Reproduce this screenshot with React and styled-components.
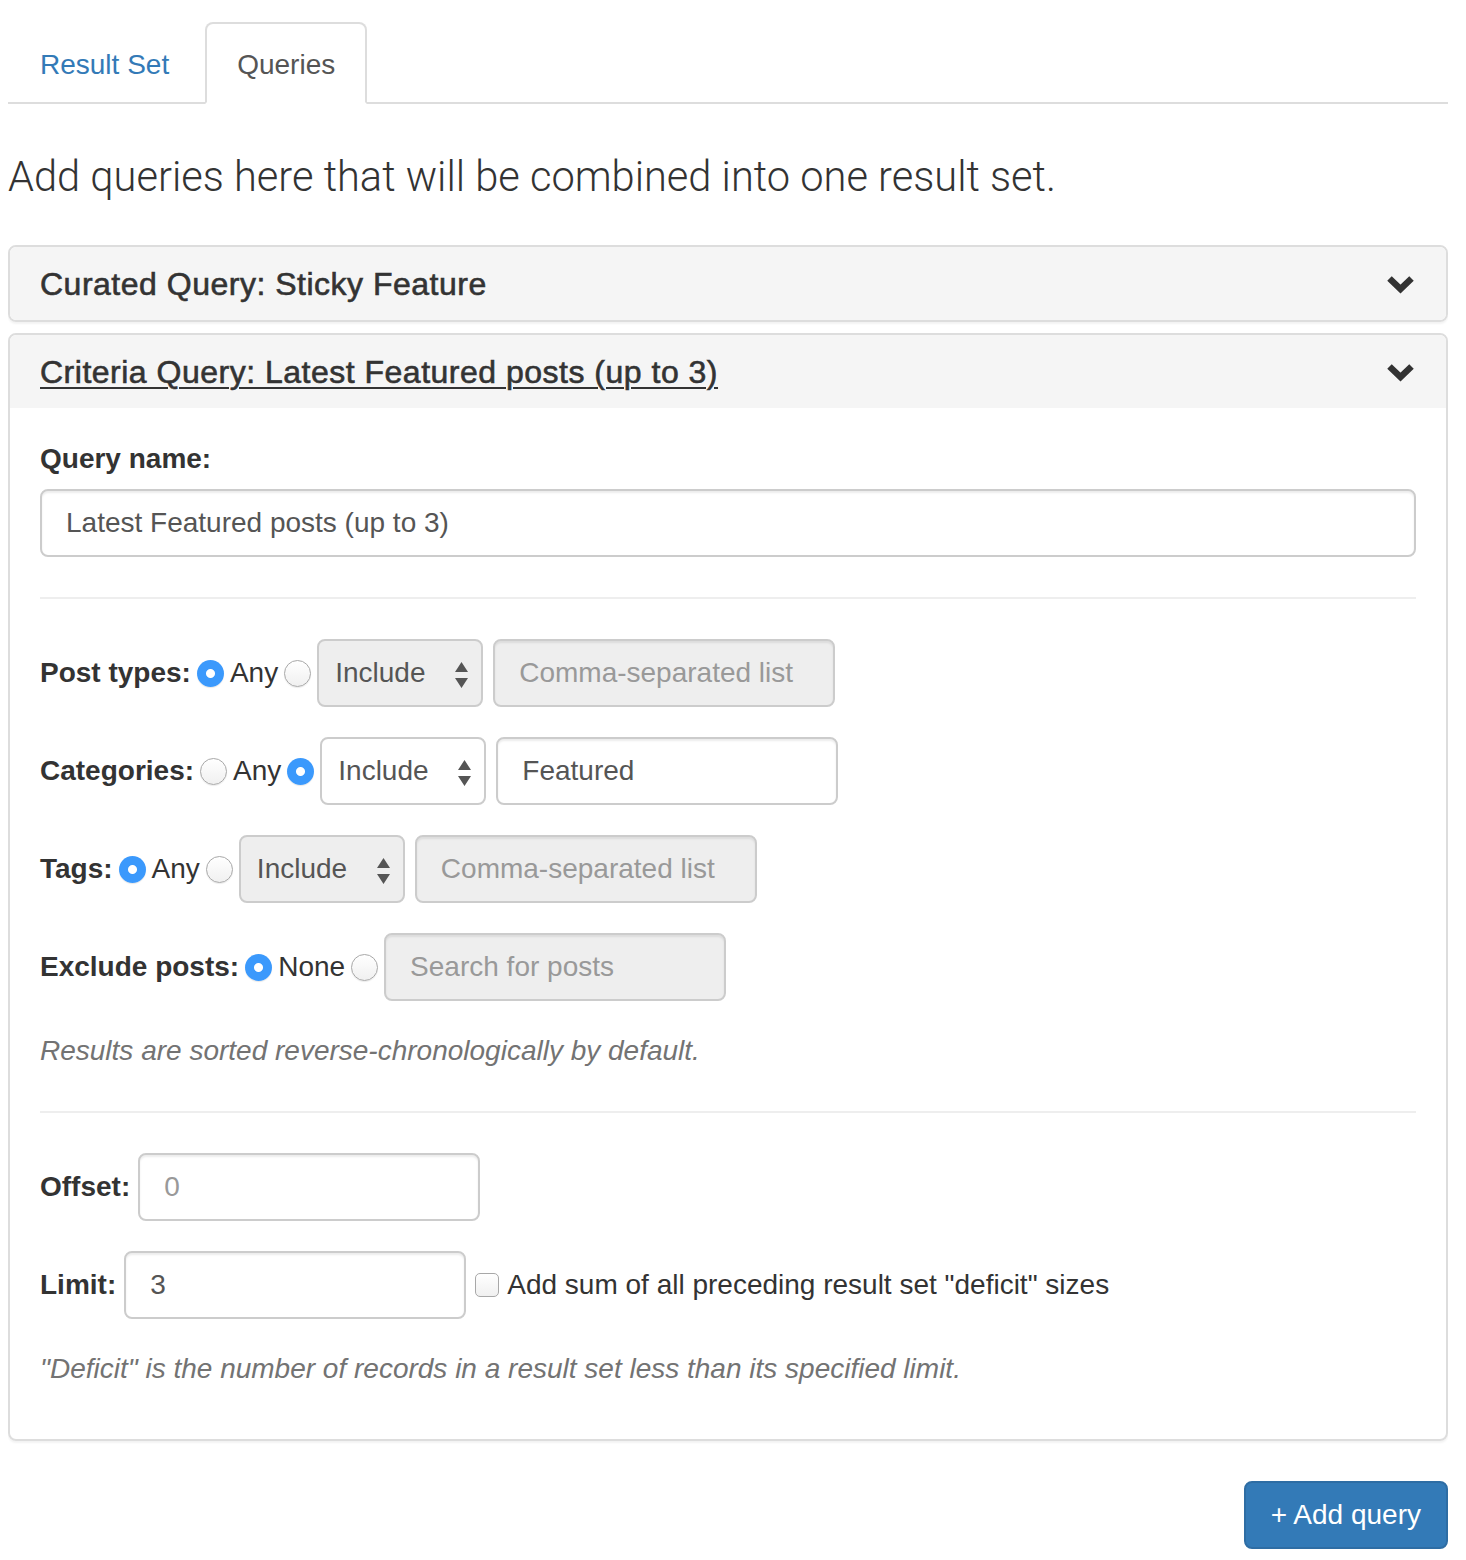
import React from 'react';
import styled, { createGlobalStyle } from 'styled-components';

const GlobalStyle = createGlobalStyle`
  body {
    margin: 8px 18px 8px 8px;
    font-family: "Liberation Sans", Helvetica, Arial, sans-serif;
    font-size: 28px;
    line-height: 40px;
    color: #333;
    background: #fff;
  }
  * { box-sizing: border-box; }
`;

const Tabs = styled.ul`
  display: flex;
  list-style: none;
  margin: 14px 0 0;
  padding: 0;
  border-bottom: 2px solid #ddd;
`;

const Tab = styled.li`
  margin-right: 4px;
  margin-bottom: -2px;
  padding: 21px 30px 17px;
  border: 2px solid transparent;
  border-radius: 8px 8px 0 0;
  color: #337ab7;
  ${p => p.$active && `
    border-color: #ddd #ddd transparent;
    background: #fff;
    color: #555;
  `}
`;

const Lead = styled.p`
  margin: 43px 0 39px;
  font-family: Roboto, "Liberation Sans", sans-serif;
  font-size: 41.6px;
  line-height: 59px;
  font-weight: 300;
`;

const Panel = styled.section`
  border: 2px solid #ddd;
  border-radius: 8px;
  box-shadow: 0 2px 2px rgba(0, 0, 0, 0.05);
  overflow: hidden;
  & + & {
    margin-top: 11px;
  }
`;

const PanelHeading = styled.div`
  display: flex;
  justify-content: space-between;
  align-items: center;
  padding: 20px 30px 18px;
  background: #f5f5f5;
`;

const PanelTitle = styled.h4`
  margin: 0;
  font-size: 32px;
  line-height: 35px;
  font-weight: normal;
  letter-spacing: 0.5px;
  -webkit-text-stroke: 0.6px #333;
  color: #333;
  text-decoration: ${p => (p.$underline ? 'underline' : 'none')};
  text-decoration-thickness: 2px;
  text-underline-offset: 4px;
`;

const ChevronBox = styled.span`
  display: flex;
  margin-right: 2px;
`;

const PanelBody = styled.div`
  padding: 31px 30px 30px;
`;

const FormGroup = styled.div`
  margin-bottom: 30px;
`;

const BlockLabel = styled.label`
  display: block;
  font-weight: bold;
  margin-bottom: 10px;
`;

const Input = styled.div`
  height: 68px;
  width: ${p => p.$width || '100%'};
  flex: none;
  padding: 12px 24px;
  border: 2px solid #ccc;
  border-radius: 8px;
  box-shadow: inset 0 2px 2px rgba(0, 0, 0, 0.075);
  background: ${p => (p.$disabled ? '#eee' : '#fff')};
  color: ${p => (p.$placeholder ? '#999' : '#555')};
  white-space: nowrap;
  margin-left: ${p => p.$ml || 0}px;
`;

const Select = styled.div`
  position: relative;
  height: 68px;
  width: 166px;
  flex: none;
  padding: 12px 16px;
  border: 2px solid #ccc;
  border-radius: 8px;
  background: ${p => (p.$disabled ? '#eee' : '#fff')};
  color: #555;
  svg {
    position: absolute;
    right: 12px;
    top: 20px;
  }
`;

const Divider = styled.hr`
  border: 0;
  border-top: 2px solid #eee;
  margin: 40px 0;
`;

const Row = styled.div`
  display: flex;
  align-items: center;
  gap: 6px;
  margin-bottom: 30px;
`;

const InlineLabel = styled.label`
  font-weight: bold;
`;

const Radio = styled.span`
  display: inline-block;
  flex: none;
  width: 27px;
  height: 27px;
  border-radius: 50%;
  ${p =>
    p.$checked
      ? `
    background: radial-gradient(circle, #fff 0 4px, #3b99fc 5px);
    box-shadow: 0 1px 1px rgba(0,0,0,0.1);
  `
      : `
    background: linear-gradient(#fff, #f0f0f0);
    border: 1.5px solid #a8a8a8;
    box-shadow: 0 1px 1px rgba(0,0,0,0.08);
  `}
`;

const Checkbox = styled.span`
  display: inline-block;
  flex: none;
  width: 24px;
  height: 24px;
  margin: 0 2px 0 3px;
  border: 1.5px solid #a8a8a8;
  border-radius: 5px;
  background: linear-gradient(#fff, #f0f0f0);
`;

const Help = styled.p`
  margin: 0 0 20px;
  color: #737373;
  font-style: italic;
`;

const Footer = styled.div`
  display: flex;
  justify-content: flex-end;
  margin-top: 40px;
`;

const Button = styled.button`
  font: inherit;
  padding: 12px 25px;
  border: 2px solid #2e6da4;
  border-radius: 8px;
  background: #337ab7;
  color: #fff;
  line-height: 40px;
`;

const Chevron = () => (
  <ChevronBox>
    <svg width="27" height="19" viewBox="0 0 27 19">
      <path d="M2.5 3.5 L13.5 14 L24.5 3.5" fill="none" stroke="#333" strokeWidth="6.5" strokeLinejoin="miter" />
    </svg>
  </ChevronBox>
);

const Arrows = () => (
  <svg width="15" height="28" viewBox="0 0 15 28">
    <path d="M7.5 1 L14 11 L1 11 Z M7.5 27 L14 17 L1 17 Z" fill="#555" />
  </svg>
);

const CriteriaRow = ({ label, first, firstChecked, disabled, value, placeholder }) => (
  <Row>
    <InlineLabel>{label}</InlineLabel>
    <Radio $checked={firstChecked} />
    <span>{first}</span>
    <Radio $checked={!firstChecked} />
    <Select $disabled={disabled}>
      Include
      <Arrows />
    </Select>
    <Input $width="342px" $ml={4} $disabled={disabled} $placeholder={!value}>
      {value || placeholder}
    </Input>
  </Row>
);

const App = () => (
  <>
    <GlobalStyle />
    <Tabs>
      <Tab>Result Set</Tab>
      <Tab $active>Queries</Tab>
    </Tabs>
    <Lead>Add queries here that will be combined into one result set.</Lead>

    <Panel>
      <PanelHeading>
        <PanelTitle>Curated Query: Sticky Feature</PanelTitle>
        <Chevron />
      </PanelHeading>
    </Panel>

    <Panel>
      <PanelHeading>
        <PanelTitle $underline>Criteria Query: Latest Featured posts (up to 3)</PanelTitle>
        <Chevron />
      </PanelHeading>
      <PanelBody>
        <FormGroup>
          <BlockLabel>Query name:</BlockLabel>
          <Input>Latest Featured posts (up to 3)</Input>
        </FormGroup>
        <Divider />
        <CriteriaRow label="Post types:" first="Any" firstChecked disabled placeholder="Comma-separated list" />
        <CriteriaRow label="Categories:" first="Any" value="Featured" />
        <CriteriaRow label="Tags:" first="Any" firstChecked disabled placeholder="Comma-separated list" />
        <Row>
          <InlineLabel>Exclude posts:</InlineLabel>
          <Radio $checked />
          <span>None</span>
          <Radio />
          <Input $width="342px" $disabled $placeholder>Search for posts</Input>
        </Row>
        <Help>Results are sorted reverse-chronologically by default.</Help>
        <Divider />
        <Row>
          <InlineLabel>Offset:</InlineLabel>
          <Input $width="342px" $ml={2} $placeholder>0</Input>
        </Row>
        <Row>
          <InlineLabel>Limit:</InlineLabel>
          <Input $width="342px" $ml={2}>3</Input>
          <Checkbox />
          <span>Add sum of all preceding result set "deficit" sizes</span>
        </Row>
        <Help>"Deficit" is the number of records in a result set less than its specified limit.</Help>
      </PanelBody>
    </Panel>

    <Footer>
      <Button>+ Add query</Button>
    </Footer>
  </>
);

export default App;
